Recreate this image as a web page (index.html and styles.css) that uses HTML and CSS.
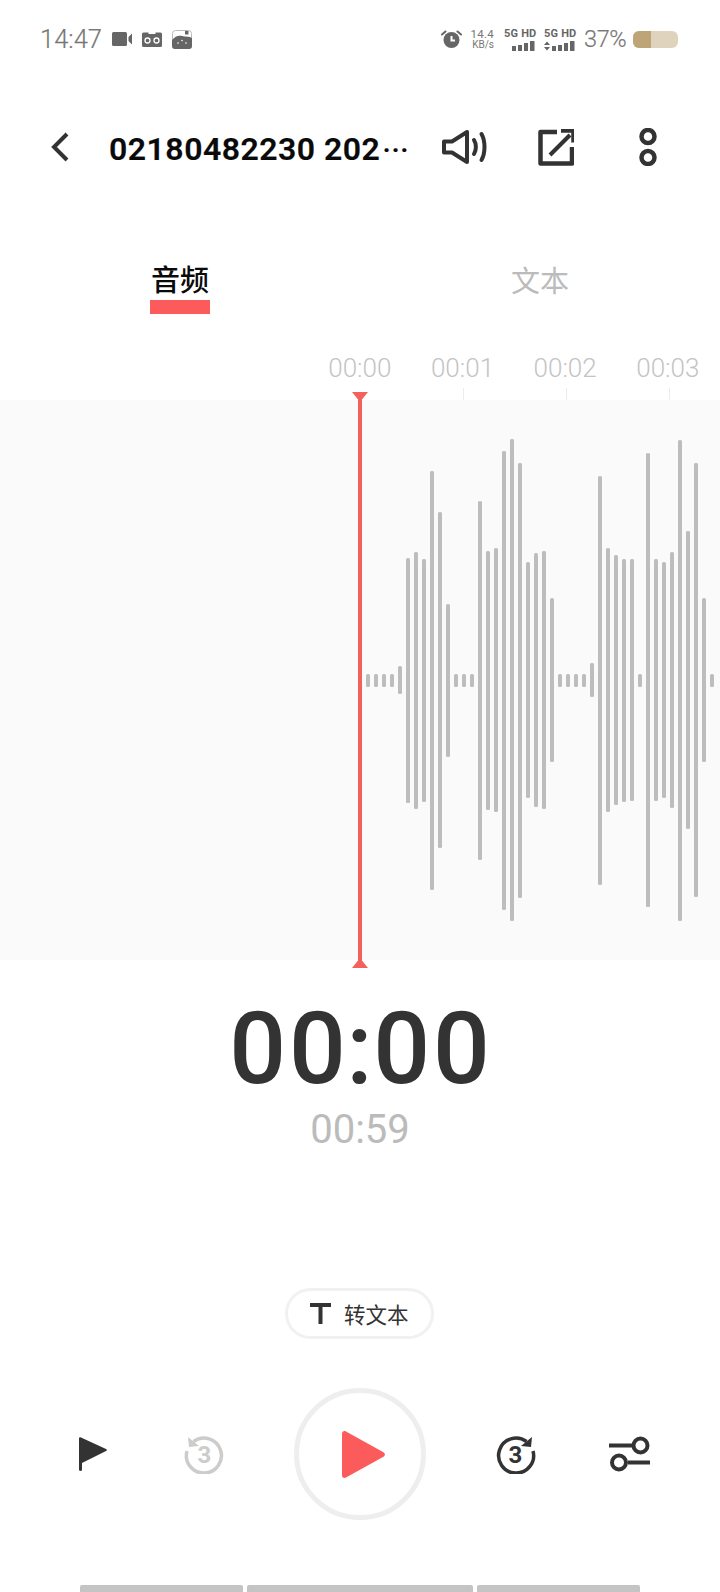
FILE: index.html
```html
<!DOCTYPE html>
<html lang="zh">
<head>
<meta charset="utf-8">
<title>录音</title>
<link rel="stylesheet" href="styles.css">
</head>
<body>
<div class="app">
  <div class="status">
    <div class="status-left">
      <span class="clock">14:47</span>
      <svg class="st-icon cam" viewBox="0 0 20 14"><rect x="0" y="0" width="15" height="14" rx="1.5"/><path d="M16.5 5 L20 1.5 V12.5 L16.5 9Z"/></svg>
      <svg class="st-icon tape" viewBox="0 0 20 16"><path d="M1.5 1.5H6.5V3H13.5V1.5H18.5A1.5 1.5 0 0 1 20 3V14.5A1.5 1.5 0 0 1 18.5 16H1.5A1.5 1.5 0 0 1 0 14.5V3A1.5 1.5 0 0 1 1.5 1.5Z"/><circle cx="5.5" cy="9.5" r="2.5" fill="none" stroke="#fff" stroke-width="1.3"/><circle cx="14.5" cy="9.5" r="2.5" fill="none" stroke="#fff" stroke-width="1.3"/></svg>
      <svg class="st-icon game" viewBox="0 0 20 19"><rect x="0.5" y="0.5" width="19" height="18" rx="3" fill="#fff" stroke="#bbb"/><path d="M0 10C3 6 7 5 10 6C14 7 17 6 20 8V16A3 3 0 0 1 17 19H3A3 3 0 0 1 0 16Z"/><rect x="13" y="1" width="3.5" height="3.5"/><circle cx="6" cy="13" r=".8" fill="#fff"/><circle cx="10" cy="10.5" r=".8" fill="#fff"/><circle cx="14" cy="13" r=".8" fill="#fff"/></svg>
    </div>
    <div class="status-right">
      <svg class="st-icon alarm" viewBox="0 0 21 18"><circle cx="10.5" cy="10" r="8"/><path d="M1 4.5 L4.5 1.5M20 4.5 L16.5 1.5" stroke="#666" stroke-width="2" stroke-linecap="round" fill="none"/><path d="M10.5 6V10.5H14" stroke="#fff" stroke-width="2" fill="none"/></svg>
      <div class="speed"><span class="speed-num">14.4</span><span class="speed-unit">KB/s</span></div>
      <div class="net">
        <span class="net-label">5G HD</span>
        <svg class="net-bars" viewBox="0 0 31 10"><rect x="8" y="5" width="4" height="5"/><rect x="14" y="4" width="4" height="6"/><rect x="20" y="2" width="4" height="8"/><rect x="26" y="0" width="4.5" height="10"/></svg>
      </div>
      <div class="net net-second">
        <span class="net-label">5G HD</span>
        <svg class="net-bars" viewBox="0 0 31 10"><path d="M0 4 L3 0.5 L6 4ZM0 6 L3 9.5 L6 6Z"/><rect x="8" y="5" width="4" height="5"/><rect x="14" y="4" width="4" height="6"/><rect x="20" y="2" width="4" height="8"/><rect x="26" y="0" width="4.5" height="10"/></svg>
      </div>
      <span class="pct">37%</span>
      <div class="battery"><div class="battery-fill"></div></div>
    </div>
  </div>

  <div class="header">
    <svg class="back" viewBox="0 0 18 30"><path d="M16 2 L3 15 L16 28" fill="none" stroke="#333" stroke-width="4"/></svg>
    <div class="title">02180482230 202<span class="dots">···</span></div>
    <svg class="speaker" viewBox="0 0 45 34"><path d="M2 11.5H10L25 2V32L10 22.5H2Z" fill="none" stroke="#333" stroke-width="4" stroke-linejoin="round"/><path d="M32 10C34.500 14 34.500 20 32 24" fill="none" stroke="#333" stroke-width="4" stroke-linecap="round"/><path d="M39.500 4C43.500 11 43.500 23 39.500 30" fill="none" stroke="#333" stroke-width="4" stroke-linecap="round"/></svg>
    <svg class="share" viewBox="0 0 36 37"><path d="M19 3H2.500V34.500H34V18" fill="none" stroke="#333" stroke-width="4.500" stroke-linejoin="round"/><path d="M12 26 L32 6" fill="none" stroke="#333" stroke-width="4"/><path d="M23 1.500H35.500V13.500" fill="none" stroke="#333" stroke-width="4.500"/></svg>
    <svg class="more" viewBox="0 0 18 38"><circle cx="9" cy="8.500" r="6.500" fill="none" stroke="#333" stroke-width="4.500"/><circle cx="9" cy="29.500" r="6.500" fill="none" stroke="#333" stroke-width="4.500"/></svg>
  </div>

  <div class="tabs">
    <div class="tab tab-active"><span class="tab-text">音频</span><span class="tab-line"></span></div>
    <div class="tab"><span class="tab-text">文本</span></div>
  </div>

  <div class="ruler">
    <div class="mark"><span class="mark-label">00:00</span></div>
    <div class="mark"><span class="mark-label">00:01</span><span class="tick"></span></div>
    <div class="mark"><span class="mark-label">00:02</span><span class="tick"></span></div>
    <div class="mark"><span class="mark-label">00:03</span><span class="tick"></span></div>
  </div>

  <div class="wave">
    <div class="head"><span class="head-top"></span><span class="head-line"></span><span class="head-bottom"></span></div>
    <i class="bar" style="height:13px"></i><i class="bar" style="height:13px"></i><i class="bar" style="height:13px"></i><i class="bar" style="height:13px"></i>
    <i class="bar" style="height:28px"></i><i class="bar" style="height:245px"></i><i class="bar" style="height:257px"></i><i class="bar" style="height:243px"></i>
    <i class="bar" style="height:419px"></i><i class="bar" style="height:336px"></i><i class="bar" style="height:153px"></i>
    <i class="bar" style="height:13px"></i><i class="bar" style="height:13px"></i><i class="bar" style="height:13px"></i>
    <i class="bar" style="height:359px"></i><i class="bar" style="height:259px"></i><i class="bar" style="height:264px"></i><i class="bar" style="height:459px"></i>
    <i class="bar" style="height:482px"></i><i class="bar" style="height:435px"></i><i class="bar" style="height:236px"></i><i class="bar" style="height:254px"></i>
    <i class="bar" style="height:258px"></i><i class="bar" style="height:164px"></i>
    <i class="bar" style="height:13px"></i><i class="bar" style="height:13px"></i><i class="bar" style="height:13px"></i><i class="bar" style="height:13px"></i>
    <i class="bar" style="height:34px"></i><i class="bar" style="height:409px"></i><i class="bar" style="height:264px"></i><i class="bar" style="height:250px"></i>
    <i class="bar" style="height:243px"></i><i class="bar" style="height:242px"></i><i class="bar" style="height:13px"></i><i class="bar" style="height:454px"></i>
    <i class="bar" style="height:242px"></i><i class="bar" style="height:236px"></i><i class="bar" style="height:256px"></i><i class="bar" style="height:481px"></i>
    <i class="bar" style="height:298px"></i><i class="bar" style="height:434px"></i><i class="bar" style="height:164px"></i><i class="bar" style="height:13px"></i>
  </div>

  <div class="time">00<span class="time-colon">:</span>00</div>
  <div class="total">00:59</div>

  <div class="convert">
    <svg class="t-icon" viewBox="0 0 21 21"><path d="M0 0H21V4H12.500V21H8.500V4H0Z"/></svg>
    <span class="convert-text">转文本</span>
  </div>

  <div class="controls">
    <svg class="flag" viewBox="0 0 28 34"><path d="M0 1.500C0 .5 1 0 2 .5L27 12C28.200 12.600 28.200 13.400 27 14L3 26V32.500A1.500 1.500 0 0 1 0 32.500Z"/></svg>
    <svg class="skip skip-back" viewBox="0 0 40 40"><path d="M9.500 7.500A17.500 17.500 0 1 1 3 17" fill="none" stroke="#ccc" stroke-width="3.500"/><path d="M4 3 L5 13 L15 12Z" fill="#ccc"/><text x="20.500" y="29" class="skip-num">3</text></svg>
    <div class="play"><svg class="play-tri" viewBox="0 0 43 47"><path d="M0 3C0 .5 2 -.5 4 .5L41 21C43.500 22.500 43.500 24.500 41 26L4 46.500C2 47.500 0 46.500 0 44Z"/></svg></div>
    <svg class="skip skip-fwd" viewBox="0 0 40 40"><path d="M30.500 7.500A17.500 17.500 0 1 0 37 17" fill="none" stroke="#333" stroke-width="3.500"/><path d="M36 3 L35 13 L25 12Z" fill="#333"/><text x="19.500" y="29" class="skip-num">3</text></svg>
    <svg class="sliders" viewBox="0 0 41 36"><path d="M0 9.500H23M19 26.500H41" stroke="#333" stroke-width="4" fill="none"/><circle cx="31.500" cy="9.500" r="7" fill="#fff" stroke="#333" stroke-width="4"/><circle cx="10" cy="26.500" r="7" fill="#fff" stroke="#333" stroke-width="4"/></svg>
  </div>

  <div class="navbar"><span class="seg seg-a"></span><span class="seg seg-b"></span><span class="seg seg-a"></span></div>
</div>
</body>
</html>
```
FILE: styles.css
```css
* { box-sizing: border-box; }
html, body { margin: 0; padding: 0; background: #fff; }
body { font-family: Roboto, "Noto Sans CJK SC", sans-serif; }

.app { width: 720px; height: 1592px; overflow: hidden; display: flex; flex-direction: column; background: #fff; }

/* status bar */
.status { height: 78px; padding: 0 42px 0 40px; display: flex; align-items: center; justify-content: space-between; color: #777; }
.status-left, .status-right { display: flex; align-items: center; }
.clock { font-size: 25.5px; font-weight: 300; width: 62px; white-space: nowrap; -webkit-text-stroke: .2px #777; }
.st-icon { fill: #666; display: block; }
.cam { width: 20px; height: 14px; margin-left: 10px; }
.tape { width: 20px; height: 16px; margin-left: 10px; }
.game { width: 20px; height: 19px; margin-left: 10px; }
.alarm { width: 21px; height: 18px; }
.speed { display: flex; flex-direction: column; align-items: flex-end; width: 24px; margin-left: 8px; }
.speed-num { font-size: 11.5px; line-height: 11px; letter-spacing: .3px; }
.speed-unit { font-size: 10px; line-height: 10px; }
.net { width: 32px; margin-left: 10px; display: flex; flex-direction: column; }
.net-second { margin-left: 8px; }
.net-label { font-size: 11px; font-weight: 700; line-height: 12px; color: #666; white-space: nowrap; letter-spacing: .2px; }
.net-bars { width: 31px; height: 10px; fill: #666; display: block; margin-top: 1px; }
.pct { font-size: 23.5px; font-weight: 300; margin-left: 8px; width: 40px; white-space: nowrap; letter-spacing: -.4px; -webkit-text-stroke: .2px #777; }
.battery { width: 45px; height: 17px; border-radius: 6px; background: #dfd3bd; margin-left: 9px; overflow: hidden; }
.battery-fill { width: 18px; height: 100%; background: #bda577; }

/* header */
.header { height: 138px; display: flex; align-items: center; padding-left: 51px; }
.back { width: 18px; height: 30px; flex: none; }
.title { width: 302px; margin: 3px 0 0 40px; font-size: 32px; font-weight: 600; color: #0a0a0a; letter-spacing: .5px; white-space: nowrap; overflow: hidden; -webkit-text-stroke: .2px #0a0a0a; }
.dots { letter-spacing: .8px; font-size: 28px; margin-left: 2px; }
.speaker { width: 45px; height: 34px; margin-left: 31px; flex: none; }
.share { width: 36px; height: 37px; margin-left: 51px; flex: none; }
.more { width: 18px; height: 38px; margin-left: 65px; flex: none; }

/* tabs */
.tabs { height: 98px; display: flex; }
.tab { width: 360px; height: 98px; display: flex; flex-direction: column; align-items: center; }
.tab-text { font-size: 29px; line-height: 38px; margin-top: 47px; color: #bbb; }
.tab-active .tab-text { color: #0a0a0a; font-weight: 500; margin-top: 46px; }
.tab-line { width: 60px; height: 14px; background: #fb5b5b; margin-top: 0; }

/* ruler */
.ruler { height: 86px; display: flex; padding-left: 308.500px; }
.mark { width: 102.67px; display: flex; flex-direction: column; align-items: center; position: relative; }
.mark-label { font-size: 26px; font-weight: 300; line-height: 28px; margin-top: 40px; color: #c4c4c4; white-space: nowrap; }
.tick { width: 1px; height: 12px; background: #ececec; margin: 6px 0 0 3px; }

/* waveform */
.wave { height: 560px; background: #fafafb; display: flex; align-items: center; gap: 4px; padding-left: 366px; position: relative; overflow: visible; }
.bar { display: block; width: 4px; flex: none; background: #bdbdbd; border-radius: 1.5px; }
.head { position: absolute; left: 352px; top: -8px; width: 16px; height: 576px; }
.head-line { position: absolute; left: 6px; top: 0; width: 4px; height: 576px; background: #f0625a; }
.head-top { position: absolute; left: 0; top: 0; width: 0; height: 0; border-left: 8px solid transparent; border-right: 8px solid transparent; border-top: 10px solid #f0625a; }
.head-bottom { position: absolute; left: 0; bottom: 0; width: 0; height: 0; border-left: 8px solid transparent; border-right: 8px solid transparent; border-bottom: 10px solid #f0625a; }

/* time */
.time { margin-top: 39px; height: 100px; line-height: 100px; font-size: 100px; font-weight: 500; text-align: center; color: #333; letter-spacing: 3px; white-space: nowrap; padding-left: 2px; }
.time-colon { margin: 0 -2.500px; }
.total { margin-top: 9px; height: 44px; line-height: 44px; font-size: 40px; text-align: center; color: #bbb; }

/* convert */
.convert { margin: 136px 0 0 285px; width: 149px; height: 51px; border: 3px solid #f1f1f1; border-radius: 26px; display: flex; align-items: center; padding-left: 22px; }
.t-icon { width: 21px; height: 21px; fill: #333; flex: none; }
.convert-text { margin-left: 13px; font-size: 21.5px; color: #333; white-space: nowrap; }

/* controls */
.controls { margin-top: 49px; height: 132px; display: flex; align-items: center; padding-left: 79px; }
.flag { width: 28px; height: 34px; fill: #333; flex: none; }
.skip { width: 40px; height: 40px; flex: none; }
.skip-back { margin-left: 77px; }
.skip-fwd { margin-left: 70px; }
.skip-num { font: 700 24px Roboto, sans-serif; text-anchor: middle; }
.skip-back .skip-num { fill: #ccc; }
.skip-fwd .skip-num { fill: #333; }
.play { width: 132px; height: 132px; margin-left: 70px; border: 5px solid #eee; border-radius: 50%; display: flex; align-items: center; justify-content: center; flex: none; padding-left: 6px; }
.play-tri { width: 43px; height: 47px; fill: #fb5b5b; }
.sliders { width: 41px; height: 36px; margin-left: 73px; flex: none; }

/* gesture bar */
.navbar { margin-top: auto; height: 7px; display: flex; gap: 4px; padding-left: 80px; }
.seg { height: 7px; background: #c4c4c4; border-radius: 2px 2px 0 0; }
.seg-a { width: 163px; }
.seg-b { width: 226px; }
```
